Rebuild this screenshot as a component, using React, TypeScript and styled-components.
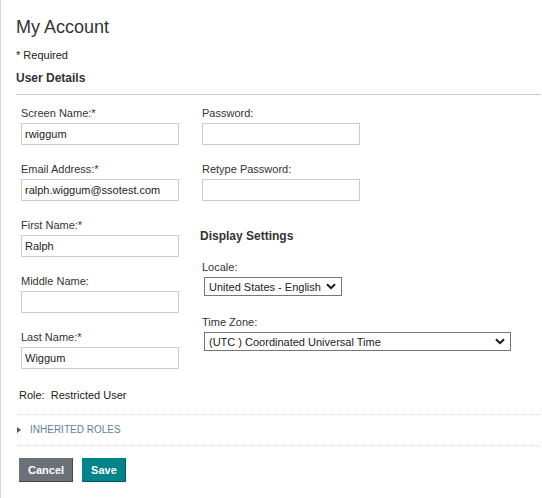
import styled, { createGlobalStyle } from 'styled-components';

const GlobalStyle = createGlobalStyle`
    html, body {
        margin: 0;
        padding: 0;
        background: #fff;
    }
    body {
        font-family: "Liberation Sans", Arial, sans-serif;
        color: #333;
    }
    * {
        box-sizing: border-box;
    }
`;

interface Field {
    id: string;
    label: string;
    value?: string;
    type?: string;
}

const leftFields: Field[] = [
    { id: 'screenName', label: 'Screen Name:*', value: 'rwiggum' },
    { id: 'email', label: 'Email Address:*', value: 'ralph.wiggum@ssotest.com' },
    { id: 'firstName', label: 'First Name:*', value: 'Ralph' },
    { id: 'middleName', label: 'Middle Name:', value: '' },
    { id: 'lastName', label: 'Last Name:*', value: 'Wiggum' },
];

const passwordFields: Field[] = [
    { id: 'password', label: 'Password:', type: 'password' },
    { id: 'retypePassword', label: 'Retype Password:', type: 'password' },
];

const Chevron = () => (
    <ChevronIcon width="10" height="7" viewBox="0 0 10 7">
        <polyline points="1,1.2 5,5.2 9,1.2" fill="none" stroke="#1a1a1a" strokeWidth="2" />
    </ChevronIcon>
);

const MyAccount = () => {
    return (
        <Page>
            <GlobalStyle />
            <Title>My Account</Title>
            <Required>* Required</Required>
            <SectionHeader>User Details</SectionHeader>

            <FormGrid>
                <Column>
                    {leftFields.map(field => (
                        <FieldGroup key={field.id}>
                            <Label htmlFor={field.id}>{field.label}</Label>
                            <TextInput id={field.id} defaultValue={field.value} />
                        </FieldGroup>
                    ))}
                </Column>
                <Column>
                    {passwordFields.map(field => (
                        <FieldGroup key={field.id}>
                            <Label htmlFor={field.id}>{field.label}</Label>
                            <TextInput id={field.id} type={field.type} />
                        </FieldGroup>
                    ))}
                    <SubHeading>Display Settings</SubHeading>
                    <SelectGroup>
                        <Label htmlFor="locale">Locale:</Label>
                        <SelectWrap $width={138}>
                            <Select id="locale" defaultValue="en_US">
                                <option value="en_US">United States - English</option>
                            </Select>
                            <Chevron />
                        </SelectWrap>
                    </SelectGroup>
                    <SelectGroup $spaced>
                        <Label htmlFor="timezone">Time Zone:</Label>
                        <SelectWrap $width={307}>
                            <Select id="timezone" defaultValue="UTC">
                                <option value="UTC">(UTC ) Coordinated Universal Time</option>
                            </Select>
                            <Chevron />
                        </SelectWrap>
                    </SelectGroup>
                </Column>
            </FormGrid>

            <RoleRow>
                <span>Role:</span>
                <RoleValue>Restricted User</RoleValue>
            </RoleRow>

            <Disclosure>
                <Triangle />
                <DisclosureLabel>Inherited Roles</DisclosureLabel>
            </Disclosure>

            <ButtonBar>
                <Button type="button" $variant="cancel">Cancel</Button>
                <Button type="button" $variant="save">Save</Button>
            </ButtonBar>
        </Page>
    );
};

const Page = styled.div`
    min-height: 100vh;
    border-left: 1px solid #d4d4d4;
    padding: 17px 1px 0 15px;
`;

const Title = styled.h1`
    margin: 0;
    font-size: 18px;
    line-height: 21px;
    font-weight: normal;
    color: #333;
`;

const Required = styled.div`
    margin-top: 10px;
    font-size: 11px;
    line-height: 14px;
    color: #222;
`;

const SectionHeader = styled.h2`
    margin: 9px 0 0;
    padding-bottom: 9px;
    border-bottom: 1px solid #ccc;
    font-size: 12px;
    line-height: 14px;
    font-weight: bold;
    color: #333;
`;

const FormGrid = styled.div`
    display: grid;
    grid-template-columns: 158px 1fr;
    column-gap: 23px;
    margin-top: 11px;
    padding-left: 5px;
`;

const Column = styled.div`
    display: flex;
    flex-direction: column;
    gap: 17px;
`;

const FieldGroup = styled.div`
    display: flex;
    flex-direction: column;
    gap: 3px;
`;

const Label = styled.label`
    font-size: 11px;
    line-height: 14px;
    color: #333;
`;

const TextInput = styled.input`
    width: 158px;
    height: 22px;
    margin: 0;
    padding: 0 3px;
    border: 1px solid #ccc;
    border-radius: 0;
    font-family: "Liberation Sans", Arial, sans-serif;
    font-size: 11px;
    color: #222;
    outline: none;
`;

const SubHeading = styled.h3`
    margin: 11px 0 0 -2px;
    font-size: 12px;
    line-height: 14px;
    font-weight: bold;
    color: #333;
`;

const SelectGroup = styled.div<{ $spaced?: boolean }>`
    display: flex;
    flex-direction: column;
    gap: 3px;
    margin-top: ${p => (p.$spaced ? '2px' : '0')};
`;

const SelectWrap = styled.div<{ $width: number }>`
    position: relative;
    width: ${p => p.$width}px;
    margin-left: 2px;
`;

const Select = styled.select`
    display: block;
    width: 100%;
    height: 19px;
    margin: 0;
    padding: 0 18px 0 4px;
    border: 1px solid #767676;
    border-radius: 0;
    background: #fff;
    appearance: none;
    font-family: "Liberation Sans", Arial, sans-serif;
    font-size: 11px;
    color: #222;
    outline: none;
`;

const ChevronIcon = styled.svg`
    position: absolute;
    right: 6px;
    top: 6px;
    pointer-events: none;
`;

const RoleRow = styled.div`
    display: flex;
    gap: 6px;
    margin-top: 19px;
    padding-left: 3px;
    font-size: 11px;
    line-height: 14px;
    color: #222;
`;

const RoleValue = styled.span`
    color: #222;
`;

const Disclosure = styled.div`
    display: flex;
    align-items: center;
    gap: 9px;
    height: 32px;
    margin-top: 12px;
    padding-left: 1px;
    border-top: 1px dotted #d8d8d8;
    border-bottom: 1px dotted #d8d8d8;
    cursor: pointer;
`;

const Triangle = styled.span`
    width: 0;
    height: 0;
    border-top: 3px solid transparent;
    border-bottom: 3px solid transparent;
    border-left: 4px solid #555;
`;

const DisclosureLabel = styled.span`
    font-size: 10px;
    line-height: 12px;
    text-transform: uppercase;
    color: #5f7fa3;
`;

const ButtonBar = styled.div`
    display: flex;
    gap: 9px;
    margin-top: 12px;
    padding-left: 3px;
`;

const Button = styled.button<{ $variant: 'cancel' | 'save' }>`
    height: 24px;
    margin: 0;
    padding: 0 9px;
    border: none;
    border-radius: 0;
    background: ${p => (p.$variant === 'save' ? '#00838b' : '#6c7177')};
    box-shadow: inset -1px -1px 0 ${p => (p.$variant === 'save' ? '#005a60' : '#44484d')};
    font-family: "Liberation Sans", Arial, sans-serif;
    font-size: 11px;
    font-weight: bold;
    color: #fff;
    cursor: pointer;
`;

export default MyAccount;
